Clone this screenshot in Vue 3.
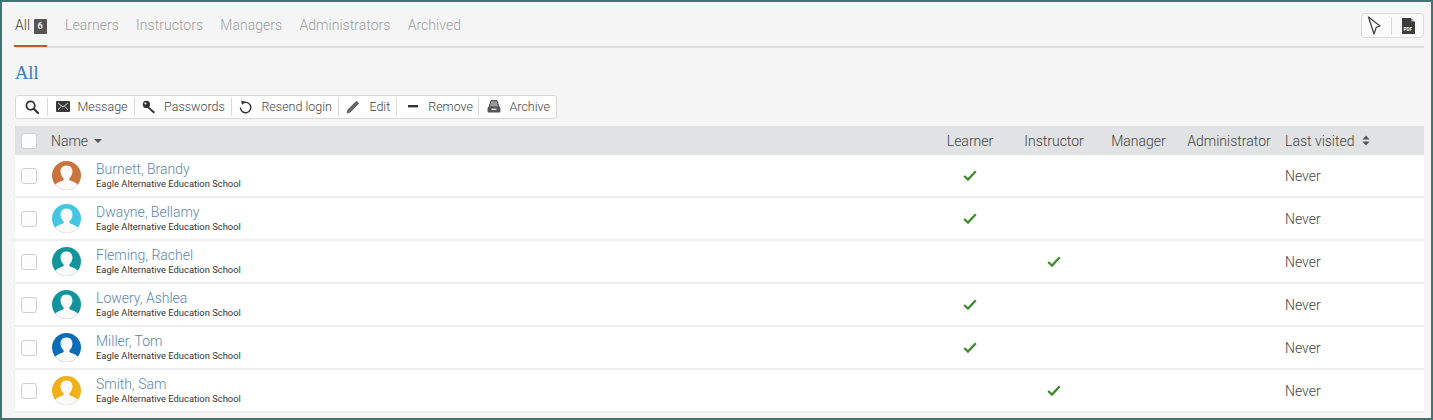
<script setup>
const tabs = ['Learners', 'Instructors', 'Managers', 'Administrators', 'Archived']
const school = 'Eagle Alternative Education School'
const rows = [
  { name: 'Burnett, Brandy', color: '#c8743c', role: 0 },
  { name: 'Dwayne, Bellamy', color: '#42c6e2', role: 0 },
  { name: 'Fleming, Rachel', color: '#12949c', role: 1 },
  { name: 'Lowery, Ashlea', color: '#12949c', role: 0 },
  { name: 'Miller, Tom', color: '#0a6db5', role: 0 },
  { name: 'Smith, Sam', color: '#f0b018', role: 1 },
]
</script>

<template>
  <div class="frame">
    <div class="tabbar">
      <div class="tab active">All <span class="badge">6</span></div>
      <div v-for="t in tabs" :key="t" class="tab">{{ t }}</div>
      <div class="export">
        <svg class="cursor" width="14" height="19" viewBox="0 0 14 19">
          <path d="M1.5 1 L13 10 L9.2 11.4 L7 18 Z" fill="#fff" stroke="#444" stroke-width="1.3" stroke-linejoin="round" />
        </svg>
        <span class="sep tall"></span>
        <svg width="13" height="16" viewBox="0 0 13 16">
          <path d="M0 0 H9 L13 4 V16 H0 Z" fill="#3c3c3c" />
          <path d="M9.4 0 L13 3.6 H9.4 Z" fill="#bbb" />
          <text x="1.5" y="13" font-size="4.6" font-weight="700" fill="#fff" font-family="Roboto, sans-serif">PDF</text>
        </svg>
      </div>
    </div>

    <h1 class="title">All</h1>

    <div class="toolbar">
      <span class="tool search">
        <svg width="14" height="14" viewBox="0 0 14 14"><circle cx="5.6" cy="5.6" r="4.2" fill="none" stroke="#333" stroke-width="1.8" /><path d="M8.8 8.8 L13 13" stroke="#333" stroke-width="2.2" stroke-linecap="round" /></svg>
      </span>
      <span class="sep"></span>
      <span class="tool">
        <svg width="14" height="11" viewBox="0 0 14 11"><rect width="14" height="11" rx="1" fill="#3a3a3a" /><path d="M2 2 L7 6 L12 2 M2 9 L5.2 5.4 M12 9 L8.8 5.4" fill="none" stroke="#ddd" stroke-width="1" /></svg>
        <span class="label">Message</span>
      </span>
      <span class="sep"></span>
      <span class="tool">
        <svg width="14" height="14" viewBox="0 0 14 14"><circle cx="4.4" cy="4.4" r="3.6" fill="#333" /><path d="M6 6 L13 12 L11.6 13.4 L4.8 7.2 Z" fill="#333" /><circle cx="3.4" cy="3.4" r="1" fill="#fff" /></svg>
        <span class="label">Passwords</span>
      </span>
      <span class="sep"></span>
      <span class="tool">
        <svg width="13" height="14" viewBox="0 0 13 14"><path d="M3.2 3.6 A5.2 5.2 0 1 1 1.4 7.6" fill="none" stroke="#333" stroke-width="1.4" /><path d="M2 0.8 L5.6 1.4 L3.2 5 Z" fill="#333" /></svg>
        <span class="label mid">Resend login</span>
      </span>
      <span class="sep"></span>
      <span class="tool">
        <svg width="14" height="14" viewBox="0 0 14 14"><path d="M0.6 13.4 L1.5 9.8 L10.4 0.8 L13.2 3.6 L4.3 12.5 Z" fill="#666" /></svg>
        <span class="label mid">Edit</span>
      </span>
      <span class="sep"></span>
      <span class="tool">
        <svg class="minus" width="10" height="3" viewBox="0 0 10 3"><rect width="10" height="2.4" fill="#333" /></svg>
        <span class="label wide">Remove</span>
      </span>
      <span class="sep"></span>
      <span class="tool">
        <svg width="14" height="13" viewBox="0 0 14 13"><path d="M4 0.6 H10 L12 7 H2 Z" fill="#999" stroke="#444" stroke-width="1" /><rect x="0.6" y="7" width="12.8" height="5.4" rx="1" fill="#555" /><rect x="4.5" y="8.6" width="5" height="1.4" fill="#ddd" /></svg>
        <span class="label mid">Archive</span>
      </span>
    </div>

    <div class="table">
      <div class="grid head">
        <span class="cell-check"><span class="check"></span></span>
        <span class="name-head">Name <i class="caret"></i></span>
        <span class="center">Learner</span>
        <span class="center">Instructor</span>
        <span class="center">Manager</span>
        <span class="center">Administrator</span>
        <span class="visited sorted">Last visited
          <svg width="8" height="11" viewBox="0 0 8 11"><path d="M4 0.5 L7.6 4.6 H0.4 Z M4 10.5 L7.6 6.4 H0.4 Z" fill="#555" /></svg>
        </span>
      </div>
      <div v-for="r in rows" :key="r.name" class="grid row">
        <span class="cell-check"><span class="check"></span></span>
        <div class="person">
          <svg class="avatar" width="29" height="29" viewBox="0 0 29 29">
            <circle cx="14.5" cy="14.5" r="14.5" :fill="r.color" />
            <path d="M14.5 4.5 C10 4.5 8.2 8 8.6 11.4 C8.9 14 10.2 16.2 11.6 17.2 V19 C9.6 20.4 5.6 21 3.2 23.6 A14.5 14.5 0 0 0 25.8 23.6 C23.4 21 19.4 20.4 17.4 19 V17.2 C18.8 16.2 20.1 14 20.4 11.4 C20.8 8 19 4.5 14.5 4.5 Z" fill="#fafafa" />
            <path d="M3.4 23.8 A14.2 14.2 0 0 0 25.6 23.8" fill="none" stroke="#e6e6e6" stroke-width="0.8" />
          </svg>
          <div class="who">
            <a class="link">{{ r.name }}</a>
            <span class="school">{{ school }}</span>
          </div>
        </div>
        <span class="center tick"><svg v-if="r.role === 0" width="14" height="11" viewBox="0 0 14 11"><path d="M1.2 6 L5 9.6 L12.8 1.2" fill="none" stroke="#3a8a2a" stroke-width="2.2" /></svg></span>
        <span class="center tick"><svg v-if="r.role === 1" width="14" height="11" viewBox="0 0 14 11"><path d="M1.2 6 L5 9.6 L12.8 1.2" fill="none" stroke="#3a8a2a" stroke-width="2.2" /></svg></span>
        <span></span>
        <span></span>
        <span class="visited">Never</span>
      </div>
    </div>
  </div>
</template>

<style scoped>
.frame {
  box-sizing: border-box;
  width: 1433px;
  height: 420px;
  border: 2px solid #3f7472;
  background: #f5f5f5;
  padding: 0 7px 0 13px;
  font-family: Roboto, "Liberation Sans", sans-serif;
  font-weight: 300;
  color: #333;
  overflow: hidden;
}
.tabbar {
  display: flex;
  align-items: flex-start;
  height: 44px;
  border-bottom: 2px solid #dcdcdc;
  gap: 17.25px;
}
.tab {
  height: 44px;
  box-sizing: border-box;
  padding-top: 14px;
  font-size: 14px;
  line-height: 18px;
  letter-spacing: 0.03px;
  color: #a0a0a0;
}
.tab.active {
  color: #444;
  width: 33px;
  margin-left: -1px;
  margin-right: 0.75px;
  padding-left: 1px;
  white-space: nowrap;
  border-bottom: 2px solid #cc5226;
  height: 45px;
}
.badge {
  display: inline-block;
  width: 13px;
  height: 15px;
  background: #555;
  color: #eee;
  font-size: 9px;
  font-weight: 700;
  line-height: 15px;
  text-align: center;
  border-radius: 1px;
  vertical-align: 1px;
}
.export {
  margin-left: auto;
  margin-top: 11px;
  width: 63px;
  height: 25px;
  box-sizing: border-box;
  border: 1px solid #dcdcdc;
  border-radius: 4px;
  background: #fafafa;
  display: flex;
  align-items: center;
  justify-content: space-between;
  padding: 0 8px 0 5px;
}
.sep {
  width: 1px;
  height: 18px;
  background: #d8d8d8;
  flex: none;
}
.title {
  margin: 13px 0 0;
  font-family: "Liberation Serif", serif;
  font-size: 18.5px;
  line-height: 24px;
  font-weight: 400;
  color: #3f78b0;
}
.toolbar {
  display: inline-flex;
  align-items: center;
  height: 24px;
  margin-top: 10px;
  box-sizing: border-box;
  background: #fff;
  border: 1px solid #d8d8d8;
  border-radius: 3px;
  padding: 0 6px 1px 9px;
  font-size: 12.5px;
  color: #444;
  vertical-align: top;
}
.tool {
  display: flex;
  align-items: center;
}
.search { margin-right: 8px; }
.sep + .tool { margin-left: 7.5px; }
.label { margin: 0 6px 0 8px; }
.label.mid { margin-left: 9px; }
.label.wide { margin: 0 5px 0 10px; }
.minus { margin-left: 3.5px; }
.toolbar .tool:last-child .label { margin-right: 0; }
.table {
  margin-top: 7px;
  width: 1409px;
}
.grid {
  display: grid;
  grid-template-columns: 36px 877px 84px 84px 85px 96px 147px;
  align-items: center;
}
.head {
  height: 29px;
  background: #e0e2e3;
  font-size: 14px;
  color: #444;
}
.row {
  height: 43px;
  box-sizing: border-box;
  background: #fff;
  border-bottom: 2px solid #eeeeee;
}
.cell-check {
  display: flex;
  padding-left: 6px;
}
.check {
  width: 16px;
  height: 16px;
  box-sizing: border-box;
  border: 1px solid #cfcfcf;
  border-radius: 3px;
  background: #fdfdfd;
}
.name-head {
  display: flex;
  align-items: center;
  gap: 6px;
}
.caret {
  width: 0;
  height: 0;
  border: 4.5px solid transparent;
  border-top: 4.5px solid #555;
  border-bottom: 0;
}
.center {
  text-align: center;
  white-space: nowrap;
}
.tick {
  display: flex;
  justify-content: center;
}
.visited {
  padding-left: 8px;
  font-size: 14px;
  color: #444;
  display: flex;
  align-items: center;
}
.sorted { gap: 7px; }
.person {
  display: flex;
  align-items: center;
  gap: 15px;
  padding-left: 1px;
}
.avatar { flex: none; }
.who {
  display: flex;
  flex-direction: column;
}
.link {
  font-size: 14px;
  line-height: 17px;
  color: #5a86ad;
}
.school {
  font-size: 9.4px;
  font-weight: 400;
  line-height: 12px;
  color: #333;
}
</style>
